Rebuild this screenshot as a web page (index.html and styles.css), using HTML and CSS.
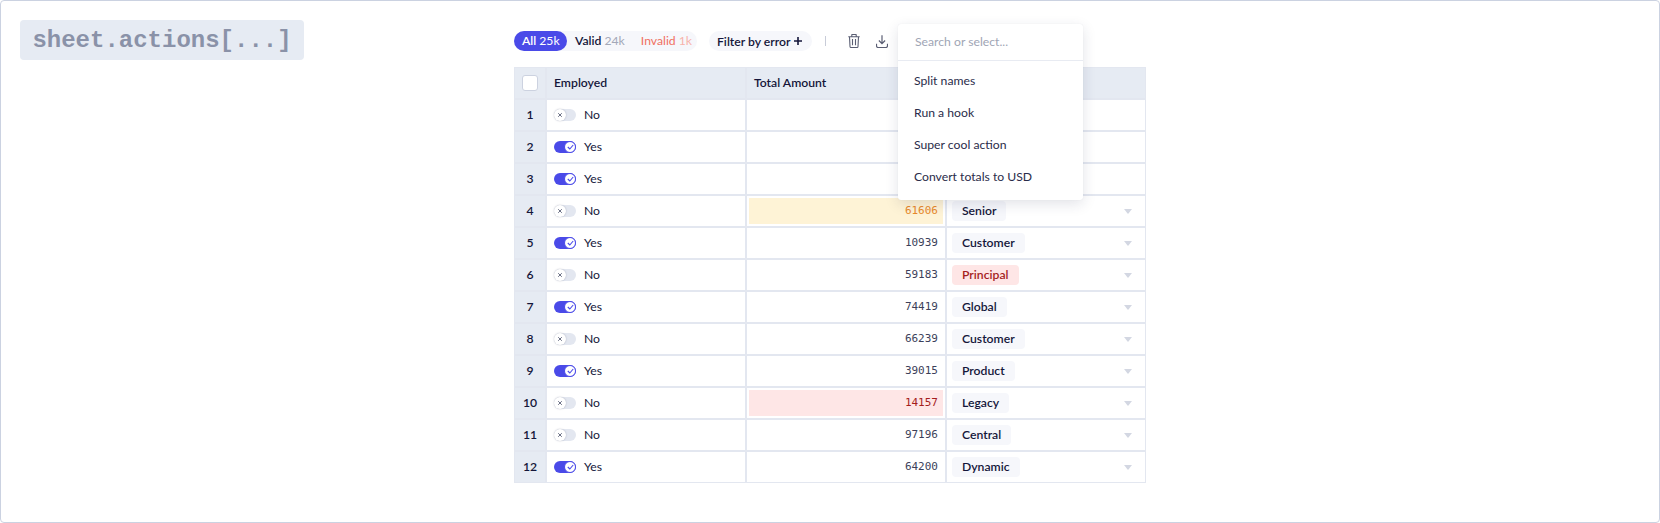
FILE: index.html
```html
<!DOCTYPE html>
<html lang="en">
<head>
<meta charset="utf-8">
<title>sheet.actions</title>
<link rel="stylesheet" href="styles.css">
</head>
<body>
<div class="frame">
  <code class="chip">sheet.actions[...]</code>
  <div class="main">
    <div class="toolbar">
      <div class="seg">
        <span class="seg-item active">All <span class="count">25k</span></span>
        <span class="seg-item">Valid <span class="count">24k</span></span>
        <span class="seg-item invalid">Invalid <span class="count">1k</span></span>
      </div>
      <div class="filter">Filter by error <svg class="plus" width="8" height="8" viewBox="0 0 8 8"><path d="M4 0v8M0 4h8" stroke="#14163a" stroke-width="1.6" fill="none"/></svg></div>
      <span class="sep"></span>
      <svg class="tool trash" width="12" height="14" viewBox="0 0 12 14" fill="none" stroke="#5a5e73" stroke-width="1.1"><path d="M.3 2.800h11.400M3.800 2.600V.9c0-.2.2-.4.4-.4h3.600c.2 0 .4.200.4.400v1.700M1.500 2.800l.5 9.600c0 .6.500 1.100 1.100 1.100h5.800c.6 0 1.100-.5 1.100-1.100l.5-9.600M4.500 5v6.300M7.500 5v6.300"/></svg>
      <svg class="tool dl" width="12" height="13" viewBox="0 0 12 13" fill="none" stroke="#5a5e73" stroke-width="1.200"><path d="M6 .3v8.200M2.900 5.500L6 8.600l3.100-3.100M.5 8.800v1.900c0 1 .8 1.800 1.800 1.800h7.400c1 0 1.800-.8 1.800-1.800V8.800"/></svg>
    </div>
    <table class="sheet">
      <thead>
        <tr>
          <th class="idx"><span class="check"></span></th>
          <th>Employed</th>
          <th>Total Amount</th>
          <th></th>
        </tr>
      </thead>
      <tbody>
        <tr><td class="idx">1</td><td><span class="toggle"><span class="sw off"><span class="knob"><svg width="6" height="6" viewBox="0 0 6 6"><path d="M1.200 1.200l3.600 3.600M4.800 1.200L1.200 4.800" stroke="#6b7085" stroke-width="1"/></svg></span></span>No</span></td><td class="num"></td><td class="cat"></td></tr>
        <tr><td class="idx">2</td><td><span class="toggle"><span class="sw on"><span class="knob"><svg width="7" height="6" viewBox="0 0 7 6"><path d="M.8 3l2 2L6.200 1" stroke="#4a4ae8" stroke-width="1.100" fill="none"/></svg></span></span>Yes</span></td><td class="num"></td><td class="cat"></td></tr>
        <tr><td class="idx">3</td><td><span class="toggle"><span class="sw on"><span class="knob"><svg width="7" height="6" viewBox="0 0 7 6"><path d="M.8 3l2 2L6.200 1" stroke="#4a4ae8" stroke-width="1.100" fill="none"/></svg></span></span>Yes</span></td><td class="num"></td><td class="cat"></td></tr>
        <tr><td class="idx">4</td><td><span class="toggle"><span class="sw off"><span class="knob"><svg width="6" height="6" viewBox="0 0 6 6"><path d="M1.200 1.200l3.600 3.600M4.800 1.200L1.200 4.800" stroke="#6b7085" stroke-width="1"/></svg></span></span>No</span></td><td class="num"><span class="val warn">61606</span></td><td class="cat"><div class="cat-in"><span class="tag">Senior</span><span class="caret"></span></div></td></tr>
        <tr><td class="idx">5</td><td><span class="toggle"><span class="sw on"><span class="knob"><svg width="7" height="6" viewBox="0 0 7 6"><path d="M.8 3l2 2L6.200 1" stroke="#4a4ae8" stroke-width="1.100" fill="none"/></svg></span></span>Yes</span></td><td class="num"><span class="val">10939</span></td><td class="cat"><div class="cat-in"><span class="tag">Customer</span><span class="caret"></span></div></td></tr>
        <tr><td class="idx">6</td><td><span class="toggle"><span class="sw off"><span class="knob"><svg width="6" height="6" viewBox="0 0 6 6"><path d="M1.200 1.200l3.600 3.600M4.800 1.200L1.200 4.800" stroke="#6b7085" stroke-width="1"/></svg></span></span>No</span></td><td class="num"><span class="val">59183</span></td><td class="cat"><div class="cat-in"><span class="tag bad">Principal</span><span class="caret"></span></div></td></tr>
        <tr><td class="idx">7</td><td><span class="toggle"><span class="sw on"><span class="knob"><svg width="7" height="6" viewBox="0 0 7 6"><path d="M.8 3l2 2L6.200 1" stroke="#4a4ae8" stroke-width="1.100" fill="none"/></svg></span></span>Yes</span></td><td class="num"><span class="val">74419</span></td><td class="cat"><div class="cat-in"><span class="tag">Global</span><span class="caret"></span></div></td></tr>
        <tr><td class="idx">8</td><td><span class="toggle"><span class="sw off"><span class="knob"><svg width="6" height="6" viewBox="0 0 6 6"><path d="M1.200 1.200l3.600 3.600M4.800 1.200L1.200 4.800" stroke="#6b7085" stroke-width="1"/></svg></span></span>No</span></td><td class="num"><span class="val">66239</span></td><td class="cat"><div class="cat-in"><span class="tag">Customer</span><span class="caret"></span></div></td></tr>
        <tr><td class="idx">9</td><td><span class="toggle"><span class="sw on"><span class="knob"><svg width="7" height="6" viewBox="0 0 7 6"><path d="M.8 3l2 2L6.200 1" stroke="#4a4ae8" stroke-width="1.100" fill="none"/></svg></span></span>Yes</span></td><td class="num"><span class="val">39015</span></td><td class="cat"><div class="cat-in"><span class="tag">Product</span><span class="caret"></span></div></td></tr>
        <tr><td class="idx">10</td><td><span class="toggle"><span class="sw off"><span class="knob"><svg width="6" height="6" viewBox="0 0 6 6"><path d="M1.200 1.200l3.600 3.600M4.800 1.200L1.200 4.800" stroke="#6b7085" stroke-width="1"/></svg></span></span>No</span></td><td class="num"><span class="val err">14157</span></td><td class="cat"><div class="cat-in"><span class="tag">Legacy</span><span class="caret"></span></div></td></tr>
        <tr><td class="idx">11</td><td><span class="toggle"><span class="sw off"><span class="knob"><svg width="6" height="6" viewBox="0 0 6 6"><path d="M1.200 1.200l3.600 3.600M4.800 1.200L1.200 4.800" stroke="#6b7085" stroke-width="1"/></svg></span></span>No</span></td><td class="num"><span class="val">97196</span></td><td class="cat"><div class="cat-in"><span class="tag">Central</span><span class="caret"></span></div></td></tr>
        <tr><td class="idx">12</td><td><span class="toggle"><span class="sw on"><span class="knob"><svg width="7" height="6" viewBox="0 0 7 6"><path d="M.8 3l2 2L6.200 1" stroke="#4a4ae8" stroke-width="1.100" fill="none"/></svg></span></span>Yes</span></td><td class="num"><span class="val">64200</span></td><td class="cat"><div class="cat-in"><span class="tag">Dynamic</span><span class="caret"></span></div></td></tr>
      </tbody>
    </table>
    <div class="menu">
      <div class="search">Search or select...</div>
      <ul class="options">
        <li>Split names</li>
        <li>Run a hook</li>
        <li>Super cool action</li>
        <li>Convert totals to USD</li>
      </ul>
    </div>
  </div>
</div>
</body>
</html>
```
FILE: styles.css
```css
* { box-sizing: border-box; }
html, body { margin: 0; padding: 0; background: #fff; }
body { font-family: "Lato", "Open Sans", sans-serif; color: #14163a; }
.frame {
  width: 1660px; height: 523px;
  border: 1px solid #cbd2e1; border-radius: 4px;
  display: flex; align-items: flex-start;
  padding: 19px;
}
.chip {
  width: 284px; height: 40px; flex: none;
  display: flex; align-items: center; justify-content: center;
  background: #e6ebf3; border-radius: 4px;
  font-family: "Liberation Mono", monospace; font-weight: 700; font-size: 24px;
  color: #8a92a8;
}
.main { position: relative; margin-left: 210px; margin-top: 11px; width: 632px; }
.toolbar { display: flex; align-items: center; height: 20px; font-size: 12.2px; font-weight: 600; }
.seg { display: flex; height: 20px; background: #f6f7fb; border-radius: 10px; width: 183px; }
.seg-item { padding: 0 8px; line-height: 20px; border-radius: 10px; white-space: nowrap; }
.seg-item.active { background: #4a4ae8; color: #fff; width: 53px; }
.seg-item .count { font-weight: 400; color: #a3a8b8; }
.seg-item.active .count { color: #fff; }
.seg-item.invalid { color: #f0705f; margin-left: auto; padding-right: 9px; font-weight: 400; }
.seg-item.invalid .count { color: #f7b3aa; }
.filter { margin-left: 12px; height: 20px; width: 103px; background: #f6f7fb; border-radius: 10px; padding: 0 10px 0 8px; display: flex; align-items: center; justify-content: space-between; white-space: nowrap; }
.sep { width: 1px; height: 10px; background: #c8ccd8; margin-left: 13px; }
.tool { flex: none; }
.trash { margin-left: 22px; }
.dl { margin-left: 16px; }
.sheet {
  margin-top: 16px;
  border-collapse: separate; border-spacing: 0; table-layout: fixed; width: 632px;
  font-size: 12.2px; line-height: 14px;
}
.sheet th, .sheet td {
  height: 32px; padding: 0 7px;
  border-right: 2px solid #e3e7f0; border-bottom: 2px solid #e3e7f0;
}
.sheet thead th { height: 33px; border-top: 1px solid #e3e7f0; background: #e6ebf3; font-weight: 600; text-align: left; }
.sheet tr > :first-child { width: 33px; border-left: 1px solid #e3e7f0; }
.sheet tr > :nth-child(2), .sheet tr > :nth-child(3) { width: 200px; }
.sheet tr > :last-child { width: 199px; border-right-width: 1px; }
.sheet tbody tr:last-child td { height: 31px; border-bottom-width: 1px; }
.sheet .idx { background: #e6ebf3; padding: 0; text-align: center; font-weight: 600; }
.check { display: block; width: 16px; height: 16px; margin: 0 auto; background: #fff; border: 1px solid #ccd2e0; border-radius: 3px; }
.toggle { display: flex; align-items: center; gap: 8px; }
.sw { width: 22px; height: 12px; border-radius: 6px; display: flex; align-items: center; }
.sw.off { background: #e3e7f0; }
.sw.on { background: #4a4ae8; justify-content: flex-end; }
.knob { width: 12px; height: 12px; border-radius: 50%; background: #fff; display: flex; align-items: center; justify-content: center; }
.sw.off .knob { box-shadow: 0 0 1.500px rgba(60, 70, 100, 0.4); }
.sw.on .knob { border: 1px solid #4a4ae8; }
.sheet .num { padding: 0; text-align: right; }
.val { display: block; height: 26px; margin: 0 2px; padding-right: 5px; line-height: 26px; font-family: "DejaVu Sans Mono", monospace; font-size: 11px; color: #3c3f5a; }
.val.warn { background: #fef3d6; color: #e8892b; }
.val.err { background: #fee6e6; color: #a51d1d; }
.sheet .cat { padding: 0 13px 0 5px; }
.cat-in { display: flex; align-items: center; justify-content: space-between; }
.tag { height: 20px; line-height: 20px; padding: 0 10px; background: #f6f7fb; border-radius: 4px; font-weight: 600; }
.tag.bad { background: #fee6e6; color: #a51d1d; }
.caret { width: 0; height: 0; border-left: 4px solid transparent; border-right: 4px solid transparent; border-top: 5px solid #d3d7e2; }
.menu {
  position: absolute; left: 384px; top: -7px; width: 185px; height: 176px;
  background: #fff; border-radius: 3px;
  box-shadow: 0 4px 14px rgba(30, 40, 80, 0.13), 0 0 1px rgba(30, 40, 80, 0.1);
  font-size: 12.2px;
}
.search { height: 37px; padding-left: 17px; line-height: 35px; color: #a0a5b5; border-bottom: 1px solid #e8ebf2; }
.options { list-style: none; margin: 4px 0 0; padding: 0; color: #2a2c4a; }
.options li { height: 32px; line-height: 32px; padding-left: 16px; }
```
